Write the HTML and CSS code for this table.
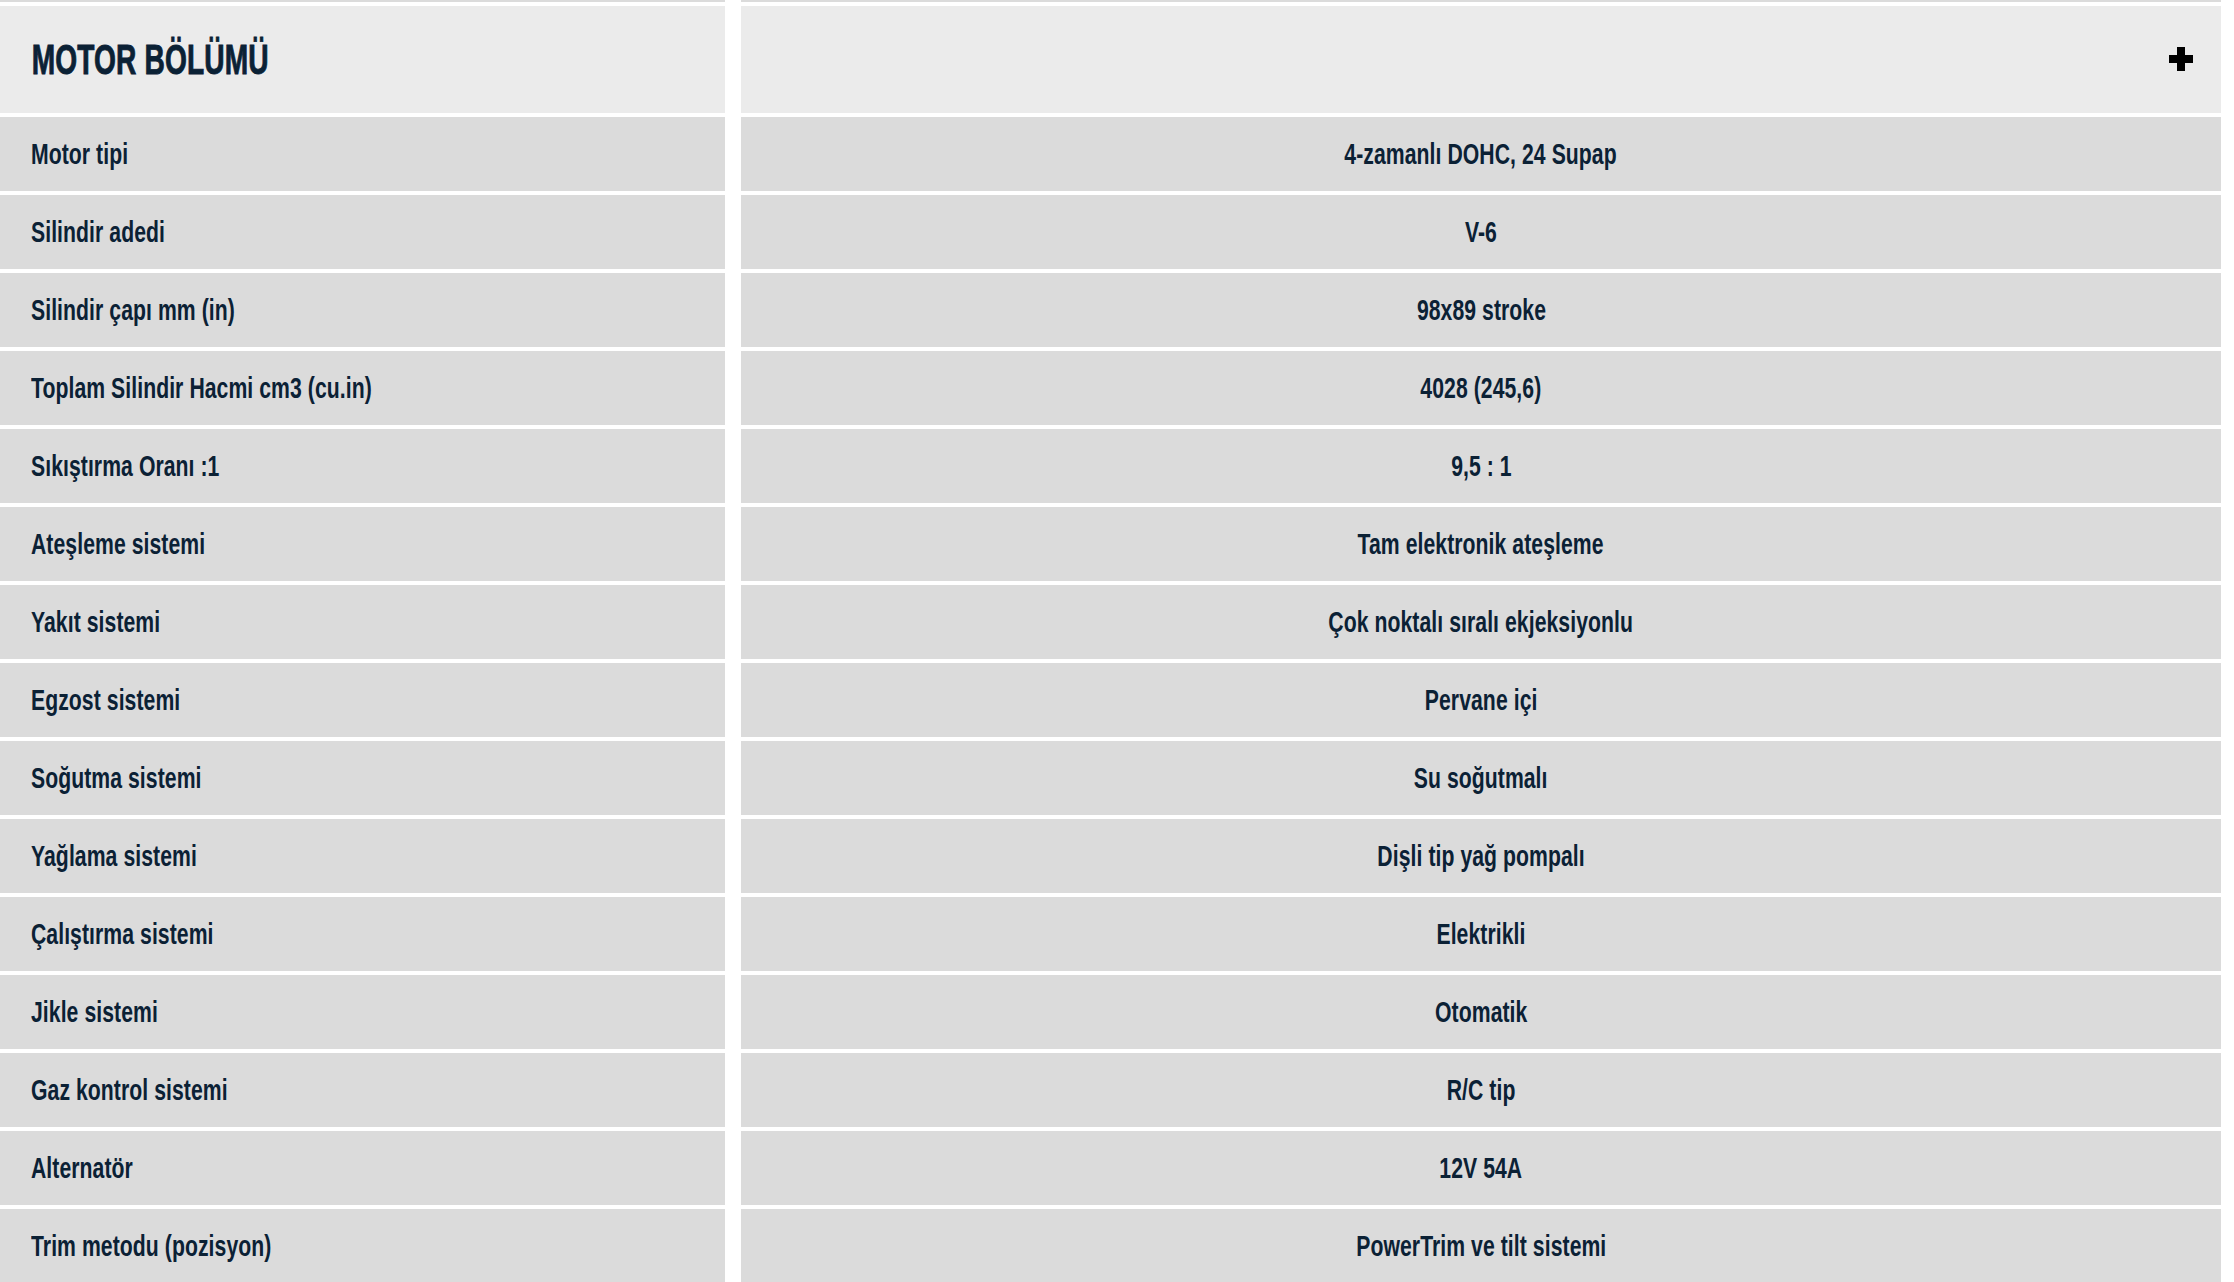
FILE: index.html
```html
<!DOCTYPE html>
<html lang="tr">
<head>
<meta charset="utf-8">
<title>Motor Bölümü</title>
<link rel="stylesheet" href="styles.css">
</head>
<body>
<div class="specs">
  <div class="row prev"><div class="cell label"></div><div class="cell value"></div></div>
  <div class="row head">
    <div class="cell label"><h2 class="title">MOTOR BÖLÜMÜ</h2></div>
    <div class="cell value toggle">
      <svg class="plus" width="24" height="24" viewBox="0 0 24 24" aria-hidden="true"><rect x="8" y="0" width="8" height="24" fill="#000"/><rect x="0" y="8" width="24" height="8" fill="#000"/></svg>
    </div>
  </div>
  <div class="row"><div class="cell label"><span class="txt">Motor tipi</span></div><div class="cell value"><span class="txt">4-zamanlı DOHC, 24 Supap</span></div></div>
  <div class="row"><div class="cell label"><span class="txt">Silindir adedi</span></div><div class="cell value"><span class="txt">V-6</span></div></div>
  <div class="row"><div class="cell label"><span class="txt">Silindir çapı mm (in)</span></div><div class="cell value"><span class="txt">98x89 stroke</span></div></div>
  <div class="row"><div class="cell label"><span class="txt">Toplam Silindir Hacmi cm3 (cu.in)</span></div><div class="cell value"><span class="txt">4028 (245,6)</span></div></div>
  <div class="row"><div class="cell label"><span class="txt">Sıkıştırma Oranı :1</span></div><div class="cell value"><span class="txt">9,5 : 1</span></div></div>
  <div class="row"><div class="cell label"><span class="txt">Ateşleme sistemi</span></div><div class="cell value"><span class="txt">Tam elektronik ateşleme</span></div></div>
  <div class="row"><div class="cell label"><span class="txt">Yakıt sistemi</span></div><div class="cell value"><span class="txt">Çok noktalı sıralı ekjeksiyonlu</span></div></div>
  <div class="row"><div class="cell label"><span class="txt">Egzost sistemi</span></div><div class="cell value"><span class="txt">Pervane içi</span></div></div>
  <div class="row"><div class="cell label"><span class="txt">Soğutma sistemi</span></div><div class="cell value"><span class="txt">Su soğutmalı</span></div></div>
  <div class="row"><div class="cell label"><span class="txt">Yağlama sistemi</span></div><div class="cell value"><span class="txt">Dişli tip yağ pompalı</span></div></div>
  <div class="row"><div class="cell label"><span class="txt">Çalıştırma sistemi</span></div><div class="cell value"><span class="txt">Elektrikli</span></div></div>
  <div class="row"><div class="cell label"><span class="txt">Jikle sistemi</span></div><div class="cell value"><span class="txt">Otomatik</span></div></div>
  <div class="row"><div class="cell label"><span class="txt">Gaz kontrol sistemi</span></div><div class="cell value"><span class="txt">R/C tip</span></div></div>
  <div class="row"><div class="cell label"><span class="txt">Alternatör</span></div><div class="cell value"><span class="txt">12V 54A</span></div></div>
  <div class="row"><div class="cell label"><span class="txt">Trim metodu (pozisyon)</span></div><div class="cell value"><span class="txt">PowerTrim ve tilt sistemi</span></div></div>
</div>
</body>
</html>
```
FILE: styles.css
```css
html, body {
  margin: 0;
  padding: 0;
  background: #ffffff;
}
body {
  font-family: "Liberation Sans", Arial, sans-serif;
  color: #0b2135;
  overflow: hidden;
}
.specs {
  display: flex;
  flex-direction: column;
  gap: 4px;
  width: 2221px;
  margin-top: -72px;
}
.row {
  display: grid;
  grid-template-columns: 725px 1480px;
  column-gap: 16px;
  height: 74px;
}
.cell {
  background: #dbdbdb;
  display: flex;
  align-items: center;
  white-space: nowrap;
}
.txt {
  display: inline-block;
  font-size: 29px;
  font-weight: 700;
  line-height: 1;
  letter-spacing: 0.1px;
  transform: scaleX(0.73);
}
.label {
  padding-left: 31px;
}
.label .txt {
  transform-origin: left center;
}
.value {
  justify-content: center;
}
.value .txt {
  transform-origin: center center;
}
.head {
  height: 107px;
}
.head .cell {
  background: #ebebeb;
}
.title {
  margin: 0;
  font-size: 42px;
  font-weight: 700;
  line-height: 1;
  letter-spacing: 0.2px;
  -webkit-text-stroke: 0.9px #0b2135;
  transform: scaleX(0.67);
  transform-origin: left center;
  padding-left: 1px;
}
.toggle {
  justify-content: flex-end;
  padding-right: 28px;
}
.plus {
  display: block;
  margin-top: -2px;
}
```
